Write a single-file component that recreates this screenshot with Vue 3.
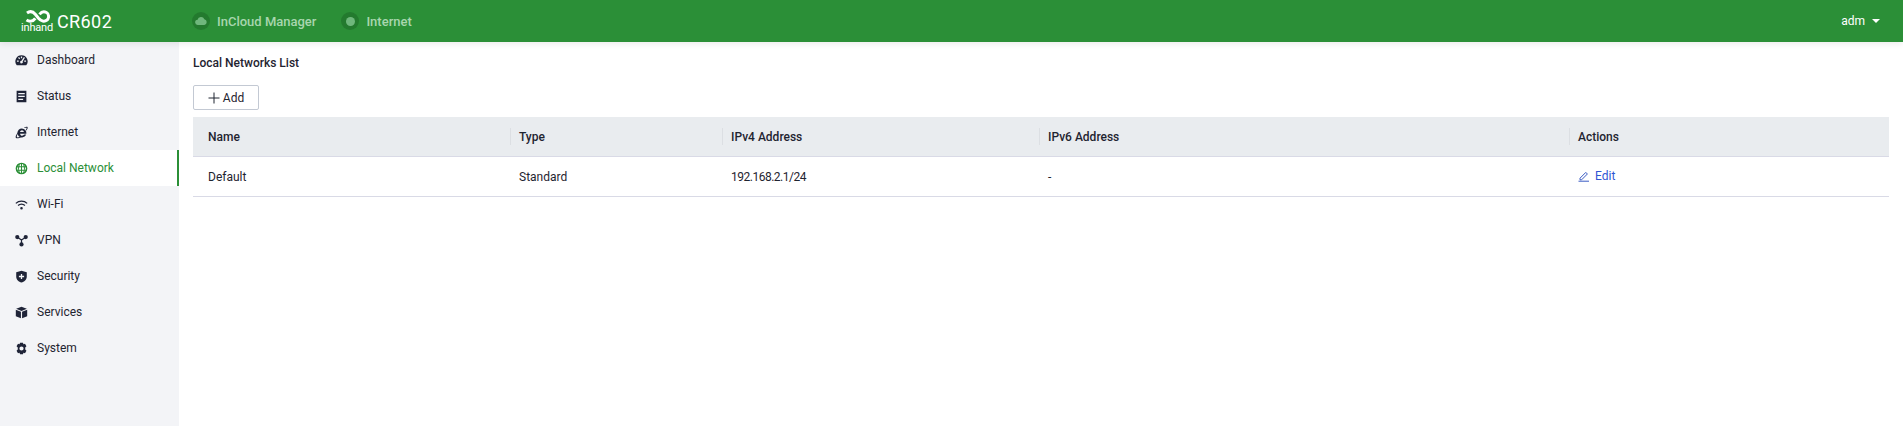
<template>
  <div class="app-container">
    <!-- top bar -->
    <header class="top-bar">
      <div class="brand">
        <div class="logo">
          <svg class="logo-mark" viewBox="0 0 26 13" width="26" height="13">
            <path d="M3 3C6 .8 9 1.500 11.500 4.500L14.500 8.300C17 11.300 20.500 12 23 10C25.300 8 25 3.800 22.500 2.500C20 1.200 17.300 2 15.500 4.300" fill="none" stroke="#fff" stroke-width="3" />
            <path d="M11.300 8.300C9 11.500 5.500 12 2.500 10" fill="none" stroke="#fff" stroke-width="3" />
          </svg>
          <span class="logo-text">inhand</span>
        </div>
        <span class="model">CR602</span>
      </div>
      <div class="status-item">
        <span class="status-dot">
          <svg viewBox="0 0 16 16" width="14" height="14"><path d="M4.500 12.500a3 3 0 0 1-.4-6A4 4 0 0 1 11.800 6a3.300 3.300 0 0 1 0 6.500z" fill="#6fb77c" /></svg>
        </span>
        <span>InCloud Manager</span>
      </div>
      <div class="status-item">
        <span class="status-dot"><i class="dot-inner"></i></span>
        <span>Internet</span>
      </div>
      <div class="user">
        <span>adm</span>
        <i class="caret"></i>
      </div>
    </header>

    <div class="body">
      <!-- side menu -->
      <aside class="side-menu">
        <div
          v-for="item in menu"
          :key="item.name"
          class="menu-item"
          :class="{ active: item.name === 'Local Network' }"
        >
          <svg class="menu-icon" viewBox="0 0 16 16" width="13" height="13" v-html="item.icon"></svg>
          <span>{{ item.name }}</span>
        </div>
      </aside>

      <!-- main content -->
      <main class="content">
        <h1 class="title">Local Networks List</h1>
        <button class="add-btn">
          <svg viewBox="0 0 12 12" width="12" height="12"><path d="M6 .5v11M.5 6h11" stroke="#1f2430" stroke-width="1" fill="none" /></svg>
          <span>Add</span>
        </button>
        <table class="data-table">
          <thead>
            <tr>
              <th v-for="col in columns" :key="col.label" :class="col.cls">{{ col.label }}</th>
            </tr>
          </thead>
          <tbody>
            <tr v-for="row in rows" :key="row.name">
              <td>{{ row.name }}</td>
              <td>{{ row.type }}</td>
              <td class="ip-cell">{{ row.ipv4 }}</td>
              <td>{{ row.ipv6 }}</td>
              <td>
                <a class="edit-link">
                  <svg viewBox="0 0 12 12" width="12" height="12">
                    <path d="M2 8.200 7.800 2.400l1.600 1.600L3.600 9.800H2z" fill="none" stroke="#3b5cc4" stroke-width="1" />
                    <path d="M.5 11.200h10.500" stroke="#3b5cc4" stroke-width="1" />
                  </svg>
                  <span>Edit</span>
                </a>
              </td>
            </tr>
          </tbody>
        </table>
      </main>
    </div>
  </div>
</template>

<script setup>
const menu = [
  { name: 'Dashboard', icon: '<path fill-rule="evenodd" d="M8 1.500a7.500 7.500 0 0 0-5.800 12.300h11.600A7.500 7.500 0 0 0 8 1.500zM7.200 3h1.600v2.200H7.200zM3.800 4.700l1.200-1 1.300 1.700-1.200 1zM11 3.700l1.200 1L9.400 9.300a1.600 1.600 0 1 1-1.400-.9zM2.400 8h2.200v1.500H2.400zM11.400 8h2.200v1.500h-2.200z"/>' },
  { name: 'Status', icon: '<path fill-rule="evenodd" d="M2 1h12v14H2zM4 3.700v1.500h8V3.700zM4 7.200v1.500h8V7.200zM4 10.700v1.500h6v-1.500z"/>' },
  { name: 'Internet', icon: '<path fill-rule="evenodd" d="M8.400 3a5.600 5.600 0 0 1 5.600 6.400H6.200c.2 1.600 1.300 2.500 2.600 2.500 1 0 1.900-.5 2.300-1.300h2.700c-.7 2-2.700 3.400-5 3.400A5.400 5.400 0 0 1 3 8.500 5.500 5.500 0 0 1 8.400 3zM6.200 7.400h4.700c-.1-1.300-1.100-2.200-2.300-2.200S6.400 6.100 6.200 7.400z"/><path d="M1 14.500C.2 13 2 9 5 6l.5.500C3 9.500 2 12.500 2.300 13.500c.5 1 2.700.5 4.700-.5l1 .6C5 15.200 2 15.800 1 14.500zM11 2c2-1 4-1.300 4.500-.5.500 1-.5 2.500-1.500 4l-.7-.5c.7-1.200 1.200-2.200 1-2.700-.3-.5-1.500-.3-2.500.2z"/>' },
  { name: 'Local Network', icon: '<circle cx="8" cy="8" r="6.300" fill="none" stroke="currentColor" stroke-width="1.800"/><path d="M8 2v12M2 5.800h12M2 10.200h12M5.300 2.500C4 6 4 10 5.300 13.500M10.700 2.500C12 6 12 10 10.700 13.500" fill="none" stroke="currentColor" stroke-width="1.300"/>' },
  { name: 'Wi-Fi', icon: '<path d="M.5 6a10.800 10.800 0 0 1 15 0l-1.100 1.200a9.200 9.200 0 0 0-12.800 0zM3.200 8.700a7 7 0 0 1 9.600 0l-1.100 1.200a5.400 5.400 0 0 0-7.400 0zM8 11a1.600 1.600 0 1 1 0 3.200A1.600 1.600 0 0 1 8 11z"/>' },
  { name: 'VPN', icon: '<circle cx="2.800" cy="3.800" r="2.600"/><circle cx="13.200" cy="3.800" r="2.600"/><circle cx="8" cy="12.800" r="2.600"/><path d="M3 4l5 3.500L13 4M8 7.500v5" stroke="currentColor" stroke-width="1.500" fill="none"/>' },
  { name: 'Security', icon: '<path fill-rule="evenodd" d="M8 .8l6.500 1.900v5.500C14.500 11.800 11.300 14.300 8 15.500 4.700 14.300 1.500 11.800 1.500 8.200V2.700zM7.200 4.800v2.400H4.800v1.600h2.400v2.400h1.600V8.800h2.400V7.200H8.800V4.800z"/>' },
  { name: 'Services', icon: '<path d="M8 .8l6.600 2.600L8 6 1.400 3.400zM1 4.700l6.300 2.500v8L1 12.500zM15 4.700v7.800l-6.300 2.700v-8z"/>' },
  { name: 'System', icon: '<path fill-rule="evenodd" d="M6.200 .8h3.600l.6 2 1.900-.6 1.800 3.100-1.500 1.400v2.600l1.500 1.400-1.800 3.100-1.900-.6-.6 2H6.200l-.6-2-1.900.6-1.800-3.100 1.500-1.400V6.700L1.900 5.300l1.800-3.100 1.900.6zM8 5.400a2.600 2.600 0 1 0 0 5.200 2.600 2.600 0 0 0 0-5.200z"/>' }
]

const columns = [
  { label: 'Name', cls: 'col-name' },
  { label: 'Type', cls: 'col-type' },
  { label: 'IPv4 Address', cls: 'col-ipv4' },
  { label: 'IPv6 Address', cls: 'col-ipv6' },
  { label: 'Actions', cls: 'col-actions' }
]

const rows = [
  { name: 'Default', type: 'Standard', ipv4: '192.168.2.1/24', ipv6: '-' }
]
</script>

<style>
html, body {
  margin: 0;
  background: #fff;
}
</style>

<style scoped>
.app-container {
  font-family: Roboto, "Noto Sans", Arial, sans-serif;
  font-size: 12px;
  color: #1f2430;
  height: 426px;
  display: flex;
  flex-direction: column;
  overflow: hidden;
}

.top-bar {
  height: 42px;
  flex: none;
  background-color: #2b8f37;
  display: flex;
  align-items: center;
  color: #a8d6ae;
  font-weight: 500;
  font-size: 13px;
  box-shadow: 0 2px 6px rgba(0, 0, 0, 0.08);
  position: relative;
  z-index: 1;
}

.brand {
  display: flex;
  align-items: center;
  width: 192px;
  padding-left: 22px;
  box-sizing: border-box;
  color: #fff;
}

.logo {
  display: flex;
  flex-direction: column;
  align-items: center;
  width: 30px;
  margin-right: 5px;
}

.logo-text {
  font-size: 11px;
  line-height: 10px;
  font-weight: 400;
  letter-spacing: -0.2px;
}

.model {
  font-size: 18px;
  font-weight: 400;
  letter-spacing: 0.4px;
}

.status-item {
  display: flex;
  align-items: center;
  gap: 7px;
  margin-right: 25px;
}

.status-dot {
  width: 18px;
  height: 18px;
  border-radius: 50%;
  background-color: #237a2e;
  display: flex;
  align-items: center;
  justify-content: center;
}

.dot-inner {
  width: 9px;
  height: 9px;
  border-radius: 50%;
  background-color: #6fb77c;
}

.user {
  margin-left: auto;
  margin-right: 23px;
  display: flex;
  align-items: center;
  gap: 7px;
  color: #fff;
  font-size: 12px;
  font-weight: 400;
}

.caret {
  width: 0;
  height: 0;
  border-left: 4px solid transparent;
  border-right: 4px solid transparent;
  border-top: 4px solid #fff;
}

.body {
  flex: 1;
  display: flex;
  min-height: 0;
}

.side-menu {
  width: 179px;
  flex: none;
  background-color: #f3f4f7;
}

.menu-item {
  height: 36px;
  display: flex;
  align-items: center;
  gap: 9px;
  padding-left: 15px;
  box-sizing: border-box;
}

.menu-icon {
  fill: currentColor;
  color: #1f2438;
  flex: none;
}

.menu-item.active {
  background-color: #fff;
  color: #2b8f37;
  border-right: 2px solid #2b8f37;
}

.menu-item.active .menu-icon {
  color: #2b8f37;
}

.content {
  flex: 1;
  min-width: 0;
  padding: 13px 14px 0;
}

.title {
  margin: 0 0 13px;
  font-size: 12px;
  line-height: 17px;
  font-weight: 500;
}

.add-btn {
  width: 66px;
  height: 25px;
  padding: 0;
  background: #fff;
  border: 1px solid #c3c9d3;
  border-radius: 2px;
  display: flex;
  align-items: center;
  justify-content: center;
  gap: 3px;
  font-family: inherit;
  font-size: 12px;
  color: #1f2430;
  margin-bottom: 7px;
}

.data-table {
  width: 100%;
  table-layout: fixed;
  border-collapse: separate;
  border-spacing: 0;
}

.data-table th,
.data-table td {
  box-sizing: border-box;
  padding: 0 8px;
  text-align: left;
  border-bottom: 1px solid #d9dae6;
}

.data-table th {
  height: 40px;
  background-color: #e9ecef;
  font-weight: 500;
  position: relative;
}

.data-table td {
  height: 40px;
  padding-top: 1px;
}

.data-table th:not(:last-child)::after {
  content: "";
  position: absolute;
  right: 0;
  top: 11px;
  bottom: 11px;
  width: 1px;
  background-color: #dcdfe3;
}

.data-table th:first-child,
.data-table td:first-child {
  padding-left: 15px;
}

.col-name { width: 318px; }
.col-type { width: 212px; }
.col-ipv4 { width: 317px; }
.col-ipv6 { width: 530px; }

.ip-cell {
  letter-spacing: -0.5px;
}

.edit-link {
  display: inline-flex;
  align-items: center;
  gap: 5px;
  color: #2f55d4;
}
</style>
